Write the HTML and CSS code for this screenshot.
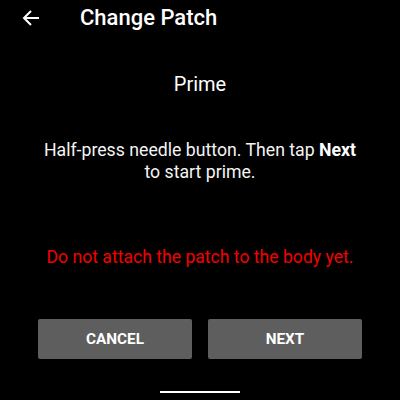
FILE: index.html
```html
<!DOCTYPE html>
<html>
<head>
<meta charset="utf-8">
<link rel="stylesheet" href="styles.css">
</head>
<body>
<div class="screen">
  <header class="toolbar">
    <span class="back">
      <svg width="18" height="18" viewBox="0 0 18 18"><path d="M17 9H2.5M9 2L2 9l7 7" fill="none" stroke="#fff" stroke-width="2"/></svg>
    </span>
    <h1 class="title">Change Patch</h1>
  </header>
  <main class="content">
    <h2 class="step">Prime</h2>
    <p class="instr">Half-press needle button. Then tap <b>Next</b><br>to start prime.</p>
    <p class="warn">Do not attach the patch to the body yet.</p>
  </main>
  <div class="actions">
    <button class="btn">CANCEL</button>
    <button class="btn">NEXT</button>
  </div>
  <div class="home"><span class="bar"></span></div>
</div>
</body>
</html>
```
FILE: styles.css
```css
html, body { margin: 0; padding: 0; background: #000; }
.screen {
  width: 400px; height: 400px;
  display: flex; flex-direction: column;
  font-family: Roboto, "Liberation Sans", sans-serif;
  color: #fff;
}
.toolbar {
  height: 36px;
  display: flex; align-items: center;
  padding-left: 22px;
}
.back { width: 18px; height: 18px; display: flex; margin-top: -1px; }
.title {
  margin: 0 0 0 40px;
  font-size: 22px; font-weight: 500;
  line-height: 26px;
}
.content {
  display: flex; flex-direction: column; align-items: center;
  text-align: center;
}
.step {
  margin: 36px 0 0;
  font-size: 20px; font-weight: 400; line-height: 24px;
}
.instr {
  margin: 43px 0 0;
  font-size: 17.7px; line-height: 22px;
  color: #f4f4f4;
}
.instr b { font-weight: 700; color: #fff; }
.warn {
  margin: 63px 0 0;
  font-size: 17.6px; line-height: 22px;
  color: #f40000;
}
.actions {
  margin-top: 51px;
  display: flex; justify-content: center; gap: 16px;
}
.btn {
  width: 154px; height: 40px;
  background: #5e5e5e; color: #fff;
  border: none; border-radius: 2px;
  font-family: Roboto, "Liberation Sans", sans-serif;
  font-size: 15.3px; font-weight: 700;
  padding: 0;
}
.home {
  margin-top: 32px;
  display: flex; justify-content: center;
}
.bar { width: 80px; height: 2px; background: #fff; }
```
